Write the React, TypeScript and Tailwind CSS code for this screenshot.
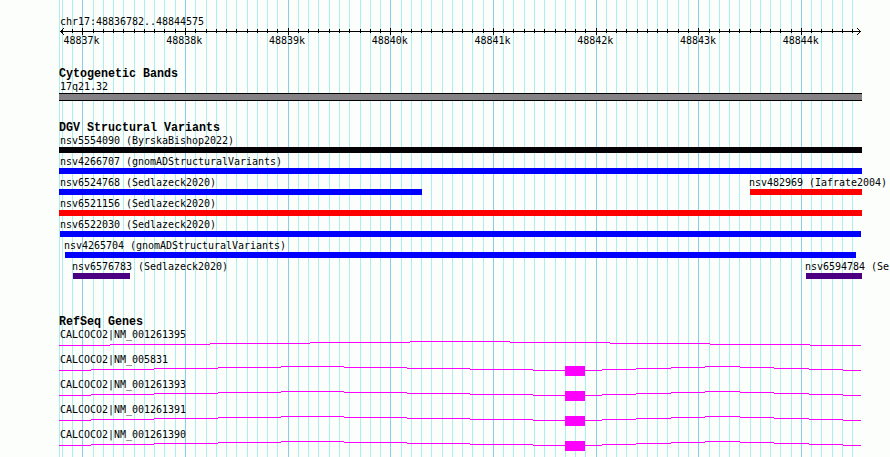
type Feature = { name: string; gap: number; width: number; color: string; shift?: string }
type Step = [x: number, y: number]

const START = 59
const END = 861
const HEIGHT = 457

// minor divisions of 100bp, every tenth one is a 1kb mark
const ticks = Array.from({ length: 78 }, (_, i) => {
  const k = i - 2
  return { x: Math.floor(82.85 + k * 10.265), major: k % 10 === 0 }
})

const rulerLabels = ['48837k', '48838k', '48839k', '48840k', '48841k', '48842k', '48843k', '48844k']

const blue = 'bg-[#0000ff]'
const red = 'bg-[#ff0000]'
const indigo = 'bg-[#4b0082]'

// gap is the distance from the end of the previous feature on the row
const variants: Feature[][] = [
  [{ name: 'nsv5554090 (ByrskaBishop2022)', gap: 0, width: 803, color: 'bg-[#040204]', shift: 'ml-px' }],
  [{ name: 'nsv4266707 (gnomADStructuralVariants)', gap: 0, width: 803, color: blue, shift: 'ml-px' }],
  [
    { name: 'nsv6524768 (Sedlazeck2020)', gap: 0, width: 363, color: blue, shift: 'ml-px' },
    { name: 'nsv482969 (Iafrate2004)', gap: 328, width: 112, color: red, shift: '-ml-px' },
  ],
  [{ name: 'nsv6521156 (Sedlazeck2020)', gap: 0, width: 803, color: red, shift: 'ml-px' }],
  [{ name: 'nsv6522030 (Sedlazeck2020)', gap: 1, width: 801, color: blue }],
  [{ name: 'nsv4265704 (gnomADStructuralVariants)', gap: 6, width: 791, color: blue, shift: '-ml-px' }],
  [
    { name: 'nsv6576783 (Sedlazeck2020)', gap: 14, width: 57, color: indigo, shift: '-ml-px' },
    { name: 'nsv6594784 (Se', gap: 676, width: 56, color: indigo, shift: '-ml-px' },
  ],
]

// each step holds its y until the next x
const longIntron: Step[] = [
  [59, 5], [110, 4], [210, 3], [310, 2], [410, 1], [510, 2], [610, 3], [710, 4], [810, 5],
]
const introns: Step[] = [
  [59, 5], [91, 4], [154, 3], [218, 2], [281, 1], [344, 2], [407, 3], [470, 4], [533, 5],
  [602, 4], [636, 3], [671, 2], [705, 1], [740, 2], [774, 3], [809, 4], [843, 5],
]

const genes = [
  { name: 'CALCOCO2|NM_001261395', steps: longIntron, exon: false },
  { name: 'CALCOCO2|NM_005831', steps: introns, exon: true },
  { name: 'CALCOCO2|NM_001261393', steps: introns, exon: true },
  { name: 'CALCOCO2|NM_001261391', steps: introns, exon: true },
  { name: 'CALCOCO2|NM_001261390', steps: introns, exon: true },
]

function Grid() {
  return (
    <svg className="absolute inset-0 -z-10" width="890" height={HEIGHT} shapeRendering="crispEdges" aria-hidden="true">
      <rect x={START} y="0" width="1" height={HEIGHT} fill="#afeeee" />
      {ticks.map(({ x, major }) => (
        <rect key={x} x={x} y="0" width="1" height={HEIGHT} fill={major ? '#87ceeb' : '#afeeee'} />
      ))}
    </svg>
  )
}

function Ruler() {
  return (
    <div className="h-[18px]">
      <svg className="block" width="803" height="9" viewBox="59 27 803 9" fill="#000" shapeRendering="crispEdges">
        <rect x="60" y="31" width="801" height="1" />
        {ticks.map(({ x, major }) => (
          <rect key={x} x={x} y={major ? 28 : 29} width="1" height={major ? 7 : 4} />
        ))}
        {[1, 2, 3].map((d) => (
          <g key={d}>
            <rect x={60 + d} y={31 - d} width="1" height="1" />
            <rect x={60 + d} y={31 + d} width="1" height="1" />
            <rect x={END - 1 - d} y={31 - d} width="1" height="1" />
            <rect x={END - 1 - d} y={31 + d} width="1" height="1" />
          </g>
        ))}
      </svg>
      <div className="ml-[4.5px] flex h-[9px] w-[822px] justify-between">
        {rulerLabels.map((label) => (
          <span key={label} className="w-[102.7px] leading-[10px]">{label}</span>
        ))}
      </div>
    </div>
  )
}

function TrackTitle({ children }: { children: string }) {
  return (
    <h2 className="h-3 origin-[0_10px] scale-y-[1.14] font-['Liberation_Mono',monospace] text-[11.67px] leading-3 font-bold whitespace-pre tracking-normal">
      {children}
    </h2>
  )
}

function VariantRow({ features }: { features: Feature[] }) {
  return (
    <div className="flex h-[21px]">
      {features.map((f) => (
        <div key={f.name} className="shrink-0" style={{ marginLeft: f.gap, width: f.width }}>
          <div className={`h-3 leading-3 whitespace-nowrap ${f.shift ?? ''}`}>{f.name}</div>
          <div className={`h-1.5 ${f.color}`} />
        </div>
      ))}
    </div>
  )
}

function Gene({ name, steps, exon }: (typeof genes)[number]) {
  return (
    <div className="h-[25px]">
      <div className="h-3 pl-px leading-[14px]">{name}</div>
      <svg className="block" width="803" height="12" viewBox="59 0 803 12" fill="#ff00ff" shapeRendering="crispEdges">
        {steps.map(([x, y], i) => (
          <rect key={x} x={x} y={y} width={(steps[i + 1]?.[0] ?? END) - x} height="1" />
        ))}
        {exon && <rect x="565" y="1" width="20" height="10" />}
      </svg>
    </div>
  )
}

export default function App() {
  return (
    <main className="relative isolate h-[457px] w-[890px] overflow-hidden bg-[#fcfefc] pt-[15px] pl-[59px] font-['DejaVu_Sans_Mono',monospace] text-[10px] tracking-[-0.02px] text-black">
      <Grid />
      <div className="h-3 pl-px leading-[14px]">chr17:48836782..48844575</div>
      <Ruler />

      <section className="mt-[23px]">
        <TrackTitle>Cytogenetic Bands</TrackTitle>
        <div className="h-[13px] pl-px leading-[14px]">17q21.32</div>
        <div className="h-2 w-[803px] border-y border-black bg-[#848284]" />
      </section>

      <section className="mt-[21px]">
        <TrackTitle>DGV Structural Variants</TrackTitle>
        <div className="mt-px">
          {variants.map((row) => (
            <VariantRow key={row[0].name} features={row} />
          ))}
        </div>
      </section>

      <section className="mt-[34px]">
        <TrackTitle>RefSeq Genes</TrackTitle>
        {genes.map((gene) => (
          <Gene key={gene.name} {...gene} />
        ))}
      </section>
    </main>
  )
}
